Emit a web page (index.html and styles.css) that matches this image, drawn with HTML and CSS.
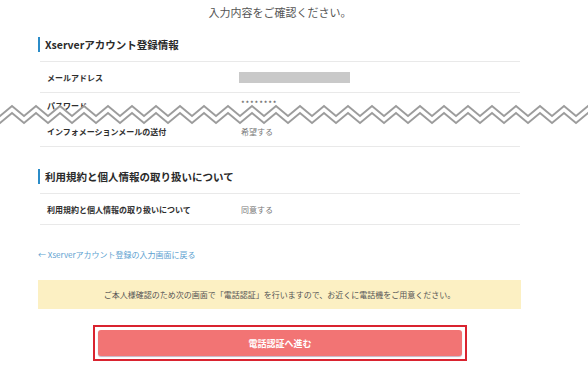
FILE: index.html
```html
<!DOCTYPE html>
<html lang="ja">
<head>
  <meta charset="UTF-8" />
  <meta name="viewport" content="width=device-width, initial-scale=1.0"/>
  <title>入力内容の確認</title>
  <link rel="stylesheet" href="styles.css">
</head>
<body>
  <div class="page">
    <p class="lead">入力内容をご確認ください。</p>

    <section class="block">
      <h2 class="block-title"><span>Xserverアカウント登録情報</span></h2>
      <div class="row">
        <div class="label">メールアドレス</div>
        <div class="value"><span class="masked"></span></div>
      </div>
      <div class="row row-top">
        <div class="label">パスワード</div>
        <div class="value stars">********</div>
      </div>
      <div class="row row-bottom">
        <div class="label">インフォメーションメールの送付</div>
        <div class="value">希望する</div>
      </div>
    </section>

    <section class="block">
      <h2 class="block-title"><span>利用規約と個人情報の取り扱いについて</span></h2>
      <div class="row">
        <div class="label">利用規約と個人情報の取り扱いについて</div>
        <div class="value">同意する</div>
      </div>
    </section>

    <a class="back" href="#">← Xserverアカウント登録の入力画面に戻る</a>

    <div class="notice">ご本人様確認のため次の画面で「電話認証」を行いますので、お近くに電話機をご用意ください。</div>

    <div class="submit-wrap">
      <button class="submit">電話認証へ進む</button>
    </div>
  </div>

  <!-- cut mark over the skipped part of the form -->
  <svg class="cut" width="588" height="30" viewBox="0 0 588 30">
    <defs>
      <pattern id="zigzag" width="24" height="30" patternUnits="userSpaceOnUse">
        <polygon points="0,16 12,6 24,16 24,23 12,13 0,23" fill="#fff"/>
        <polyline points="-1,16.8 12,6 25,16.8" fill="none" stroke="#9c9c9c" stroke-width="2"/>
        <polyline points="-1,23.8 12,13 25,23.8" fill="none" stroke="#9c9c9c" stroke-width="2"/>
      </pattern>
    </defs>
    <rect x="0" y="0" width="588" height="30" fill="url(#zigzag)"/>
  </svg>
</body>
</html>
```

FILE: styles.css
```css
* {
  box-sizing: border-box;
  margin: 0;
  padding: 0;
}

body {
  font-family: "Noto Sans CJK JP", "Noto Sans", sans-serif;
  background: #fff;
  color: #333;
  position: relative;
  width: 588px;
  height: 386px;
  overflow: hidden;
}

.page {
  width: 480px;
  margin-left: 40px;
}

.lead {
  height: 25px;
  line-height: 25px;
  text-align: center;
  font-size: 11px;
  color: #555;
}

.block {
  margin-top: 12px;
}

.block + .block {
  margin-top: 22px;
}

.block-title {
  font-size: 10.5px;
  font-weight: bold;
  color: #2a2a2a;
  padding-bottom: 9px;
  border-bottom: 1px solid #e9e9e9;
}

.block-title span {
  display: block;
  margin-left: -2px;
  padding-left: 5px;
  border-left: 2px solid #2b8cc8;
  line-height: 15px;
}

.row {
  display: grid;
  grid-template-columns: 192px 1fr;
  align-items: center;
  height: 31px;
  padding-left: 7px;
  border-bottom: 1px solid #e9e9e9;
  font-size: 8px;
}

.row-top {
  height: 24px;
  border-bottom: none;
}

.row-bottom {
  height: 30px;
}

.label {
  font-weight: bold;
  color: #2e2e2e;
}

.value {
  color: #777;
  padding-left: 2px;
}

.masked {
  display: block;
  width: 111px;
  height: 11px;
  margin-left: -2px;
  background: #c9c9c9;
}

.stars {
  color: #555;
  letter-spacing: 0.8px;
  margin-top: -3px;
}

.back {
  display: block;
  margin-top: 24px;
  margin-left: -2px;
  font-size: 8px;
  line-height: 12px;
  color: #5d9fd0;
  text-decoration: none;
}

.notice {
  margin-top: 19px;
  margin-left: -2px;
  margin-right: -1px;
  height: 29px;
  line-height: 29px;
  background: #fcf0c3;
  text-align: center;
  font-size: 8px;
  color: #555;
}

.submit-wrap {
  width: 374px;
  margin: 16px 0 0 53px;
  padding: 3px;
  border: 2px solid #d9232f;
}

.submit {
  display: block;
  width: 100%;
  height: 26px;
  border: none;
  border-radius: 3px;
  background: #f27474;
  box-shadow: 0 1px 1px rgba(90, 40, 90, 0.35);
  color: #fff;
  font-family: inherit;
  font-size: 9px;
  font-weight: bold;
}

.cut {
  position: absolute;
  left: 0;
  top: 100px;
  display: block;
}
```
